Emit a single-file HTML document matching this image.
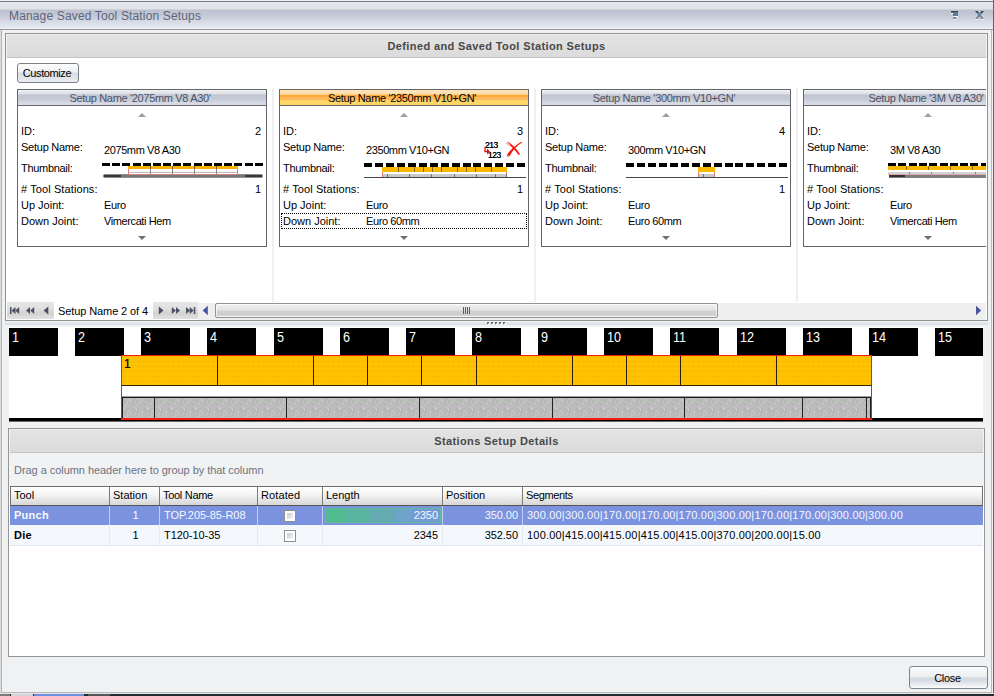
<!DOCTYPE html>
<html><head><meta charset="utf-8"><title>Manage Saved Tool Station Setups</title>
<style>
*{margin:0;padding:0;box-sizing:border-box}
html,body{width:994px;height:696px;overflow:hidden;background:#f0f1f2;font-family:"Liberation Sans",sans-serif;font-size:11px;color:#000}
#w{position:absolute;left:0;top:0;width:994px;height:696px;overflow:hidden;background:#f0f1f2}
#w div,#w i,#w span{position:absolute;display:block}
i{font-style:normal}
#tb{left:0;top:0;width:994px;height:30px;background:linear-gradient(#f4f4f6 0,#e6e7ea 2px,#e1e2e6 9px,#bcc2cf 10px,#c3c8d5 15px,#d6dbe6 22px,#e6eaf2 28px,#f4f4f6 29px)}
#tb .ttl{left:9px;top:9px;font-size:12px;color:#5e657a;letter-spacing:0.15px;white-space:nowrap}
.card{top:89px;width:250px;height:158px;border:1px solid #63666b;background:#fff;overflow:hidden}
.chd{left:0;top:0;width:248px;height:16px;border-bottom:1px solid #63666b;background:linear-gradient(#f0f1f4 0,#dcdee4 4px,#c0c5d1 5px,#c6cad6 9px,#dcdfe8 15px);text-align:center;color:#4a5268}
.chd span{position:static!important;display:inline!important;line-height:17px;letter-spacing:-0.33px;padding-right:4px}
.sel .chd{background:linear-gradient(#ffe2bc 0,#ffe0b4 3px,#f8d898 4px,#f6d08a 5px,#ffa832 5px,#ffaa38 7px,#ffb95c 7px,#ffb95c 10px,#ffd566 10px,#ffd768 15px);color:#000}
.t{white-space:nowrap;line-height:13px}
.t.v{letter-spacing:-0.4px}
.t.l{left:3px}
.t.v{left:86px}
.t.r{right:5px}
.tri{left:120px;width:0;height:0;border-left:4px solid transparent;border-right:4px solid transparent}
.tri.up{top:23px;border-bottom:4px solid #a0a0a0}
.tri.dn{top:146px;border-top:4px solid #707070}
.thumb{left:84px;top:73px;width:164px;height:16px;overflow:hidden}
.focus{left:1px;top:123px;width:246px;height:16px;border:1px dotted #000}
.ic1{left:205px;top:51px;width:20px;height:18px;font-size:8.5px;font-weight:normal;line-height:8px;letter-spacing:-0.5px;color:#000;text-shadow:0 0 0.4px #000}
.ic2{position:absolute;left:225px;top:51px}
.rb{top:328px;width:49px;height:28px;background:#000;color:#fff;font-size:14px}
.th{top:489px;line-height:13px;white-space:nowrap}
.td{line-height:13px;white-space:nowrap;letter-spacing:-0.05px}
.cb{width:12px;height:12px;border:1px solid #8e8f8f;background:linear-gradient(135deg,#c8ccd4 25%,#f4f6f8 75%);box-shadow:inset 0 0 0 2px #fff}
.rb span{left:3px;top:2px;line-height:14px;transform:scaleX(.9);transform-origin:0 0}
</style></head><body><div id="w">
<div id="tb"><div class="ttl">Manage Saved Tool Station Setups</div></div>
<svg style="position:absolute;left:945px;top:8px" width="45" height="14" viewBox="945 8 45 14" shape-rendering="crispEdges">
<rect x="951" y="11" width="7" height="1" fill="#3e3e46"/><rect x="951" y="12" width="7" height="1" fill="#6e747e"/>
<rect x="951" y="13" width="2" height="1" fill="#f4f6f8"/><rect x="953" y="13" width="5" height="3" fill="#5c7c9c"/>
<rect x="953" y="16" width="5" height="1" fill="#f4f6f8"/><rect x="953" y="17" width="3" height="2" fill="#7e848e"/><rect x="953" y="19" width="3" height="1" fill="#f4f6f8"/>
<g shape-rendering="auto"><path d="M975 11 L977.6 11 L984 19 L981.4 19 Z" fill="url(#xg)"/><path d="M984 11 L981.4 11 L975 19 L977.6 19 Z" fill="url(#xg)"/></g>
<rect x="975" y="19" width="3" height="1" fill="#f4f6f8"/><rect x="981" y="19" width="3" height="1" fill="#f4f6f8"/>
<defs><linearGradient id="xg" x1="0" y1="11" x2="0" y2="19" gradientUnits="userSpaceOnUse"><stop offset="0" stop-color="#38383e"/><stop offset=".25" stop-color="#4a4e58"/><stop offset=".3" stop-color="#6282a2"/><stop offset=".6" stop-color="#6282a2"/><stop offset=".65" stop-color="#7e858f"/><stop offset="1" stop-color="#868c96"/></linearGradient></defs>
</svg>
<i style="left:0;top:1px;width:994px;height:1px;background:#737a8a"></i>
<i style="left:0;top:29px;width:994px;height:1px;background:#9a9a9a"></i>
<i style="left:0px;top:30px;width:1px;height:664px;background:#dcdcdc"></i><i style="left:1px;top:30px;width:1px;height:663px;background:#b4b4b4"></i>
<i style="left:993px;top:0px;width:1px;height:694px;background:#5e6472"></i>
<i style="left:991px;top:30px;width:1px;height:663px;background:#b8b8b8"></i>
<!-- top panel -->
<div style="left:5px;top:33px;width:983px;height:288px;border:1px solid #919191;background:#fff"></div>
<div style="left:6px;top:34px;width:981px;height:24px;background:#f2f2f2"></div><div style="left:7px;top:35px;width:979px;height:23px;background:linear-gradient(#e3e3e3,#dbdbdb);border-bottom:1px solid #c4c4c4"></div>
<div style="left:6px;top:39px;width:981px;text-align:center;font-weight:bold;color:#484848;font-size:11px;line-height:14px;letter-spacing:0.38px">Defined and Saved Tool Station Setups</div>
<div style="left:17px;top:63px;width:62px;height:20px;border:1px solid #7b8087;border-radius:3px;background:linear-gradient(#fdfdfe 0,#eef0f3 8px,#d9dde3 9px,#e9ecf0 18px);text-align:center;line-height:18px;letter-spacing:-0.4px;padding-right:2px">Customize</div>
<i style="left:272px;top:88px;width:2px;height:214px;background:#f0f0f3"></i>
<i style="left:534px;top:88px;width:2px;height:214px;background:#f0f0f3"></i>
<i style="left:796px;top:88px;width:2px;height:214px;background:#f0f0f3"></i>
<div style="left:6px;top:84px;width:980px;height:218px;overflow:hidden">
<div style="left:-6px;top:-84px;width:994px;height:400px"><div class="card" style="left:17px;"><div class="chd"><span>Setup Name '2075mm V8 A30'</span></div><div class="tri up"></div><div class="tri dn"></div><div class="t l" style="top:35px">ID:</div><div class="t r" style="top:35px">2</div><div class="t l" style="top:51px;letter-spacing:-0.25px">Setup Name:</div><div class="t v" style="top:54px">2075mm V8 A30</div><div class="t l" style="top:72px;letter-spacing:-0.3px">Thumbnail:</div><div class="thumb"><i style="left:0.0px;top:0px;width:8px;height:3px;background:#000"></i><i style="left:10.2px;top:0px;width:8px;height:3px;background:#000"></i><i style="left:20.4px;top:0px;width:8px;height:3px;background:#000"></i><i style="left:30.5px;top:0px;width:8px;height:3px;background:#000"></i><i style="left:40.7px;top:0px;width:8px;height:3px;background:#000"></i><i style="left:50.9px;top:0px;width:8px;height:3px;background:#000"></i><i style="left:61.1px;top:0px;width:8px;height:3px;background:#000"></i><i style="left:71.3px;top:0px;width:8px;height:3px;background:#000"></i><i style="left:81.4px;top:0px;width:8px;height:3px;background:#000"></i><i style="left:91.6px;top:0px;width:8px;height:3px;background:#000"></i><i style="left:101.8px;top:0px;width:8px;height:3px;background:#000"></i><i style="left:112.0px;top:0px;width:8px;height:3px;background:#000"></i><i style="left:122.2px;top:0px;width:8px;height:3px;background:#000"></i><i style="left:132.3px;top:0px;width:8px;height:3px;background:#000"></i><i style="left:142.5px;top:0px;width:8px;height:3px;background:#000"></i><i style="left:152.7px;top:0px;width:8px;height:3px;background:#000"></i><i style="left:26px;top:3px;width:110px;height:3px;background:#f9b400"></i><i style="left:48px;top:3px;width:1px;height:8px;background:#6a5a40"></i><i style="left:70px;top:3px;width:1px;height:8px;background:#6a5a40"></i><i style="left:92px;top:3px;width:1px;height:8px;background:#6a5a40"></i><i style="left:114px;top:3px;width:1px;height:8px;background:#6a5a40"></i><i style="left:1px;top:11px;width:160px;height:4px;background:linear-gradient(#a0a0a0,#787878 1px,#787878 3px,#a8a8a8);border-radius:2px"></i><i style="left:2px;top:12px;width:17px;height:2px;background:#383838"></i><i style="left:143px;top:12px;width:17px;height:2px;background:#383838"></i><i style="left:26px;top:6px;width:110px;height:6px;border:1px solid #d88080;border-top:0;background:linear-gradient(#fff 0,#fff 3px,#bbb 3px,#bbb 4px,#fff 4px)"></i><i style="left:48px;top:6px;width:1px;height:5px;background:#888"></i><i style="left:70px;top:6px;width:1px;height:5px;background:#888"></i><i style="left:92px;top:6px;width:1px;height:5px;background:#888"></i><i style="left:114px;top:6px;width:1px;height:5px;background:#888"></i></div><div class="t l" style="top:93px;letter-spacing:0.1px"># Tool Stations:</div><div class="t r" style="top:93px">1</div><div class="t l" style="top:109px">Up Joint:</div><div class="t v" style="top:109px">Euro</div><div class="t l" style="top:125px">Down Joint:</div><div class="t v" style="top:125px">Vimercati Hem</div></div><div class="card sel" style="left:279px;"><div class="chd"><span>Setup Name '2350mm V10+GN'</span></div><div class="tri up"></div><div class="tri dn"></div><div class="t l" style="top:35px">ID:</div><div class="t r" style="top:35px">3</div><div class="t l" style="top:51px;letter-spacing:-0.25px">Setup Name:</div><div class="t v" style="top:54px">2350mm V10+GN</div><div class="t l" style="top:72px;letter-spacing:-0.3px">Thumbnail:</div><div class="thumb"><i style="left:0.0px;top:0px;width:8px;height:4px;background:#000"></i><i style="left:10.9px;top:0px;width:8px;height:4px;background:#000"></i><i style="left:21.9px;top:0px;width:8px;height:4px;background:#000"></i><i style="left:32.8px;top:0px;width:8px;height:4px;background:#000"></i><i style="left:43.8px;top:0px;width:8px;height:4px;background:#000"></i><i style="left:54.7px;top:0px;width:8px;height:4px;background:#000"></i><i style="left:65.6px;top:0px;width:8px;height:4px;background:#000"></i><i style="left:76.6px;top:0px;width:8px;height:4px;background:#000"></i><i style="left:87.5px;top:0px;width:8px;height:4px;background:#000"></i><i style="left:98.5px;top:0px;width:8px;height:4px;background:#000"></i><i style="left:109.4px;top:0px;width:8px;height:4px;background:#000"></i><i style="left:120.3px;top:0px;width:8px;height:4px;background:#000"></i><i style="left:131.3px;top:0px;width:8px;height:4px;background:#000"></i><i style="left:142.2px;top:0px;width:8px;height:4px;background:#000"></i><i style="left:153.2px;top:0px;width:8px;height:4px;background:#000"></i><i style="left:18px;top:4px;width:125px;height:5px;background:#fbb800"></i><i style="left:34px;top:4px;width:1px;height:5px;background:#8a6a10"></i><i style="left:50px;top:4px;width:1px;height:5px;background:#8a6a10"></i><i style="left:59px;top:4px;width:1px;height:5px;background:#8a6a10"></i><i style="left:68px;top:4px;width:1px;height:5px;background:#8a6a10"></i><i style="left:77px;top:4px;width:1px;height:5px;background:#8a6a10"></i><i style="left:93px;top:4px;width:1px;height:5px;background:#8a6a10"></i><i style="left:102px;top:4px;width:1px;height:5px;background:#8a6a10"></i><i style="left:111px;top:4px;width:1px;height:5px;background:#8a6a10"></i><i style="left:127px;top:4px;width:1px;height:5px;background:#8a6a10"></i><i style="left:18px;top:9px;width:125px;height:6px;border:1px solid #d88080;border-top:0;background:linear-gradient(#fff 0,#fff 2px,#c8c8c8 2px)"></i><i style="left:23px;top:11px;width:1px;height:3px;background:#777"></i><i style="left:45px;top:11px;width:1px;height:3px;background:#777"></i><i style="left:67px;top:11px;width:1px;height:3px;background:#777"></i><i style="left:90px;top:11px;width:1px;height:3px;background:#777"></i><i style="left:112px;top:11px;width:1px;height:3px;background:#777"></i><i style="left:131px;top:11px;width:1px;height:3px;background:#777"></i><i style="left:142px;top:11px;width:1px;height:3px;background:#777"></i><i style="left:0px;top:14px;width:162px;height:1px;background:#444"></i></div><div class="t l" style="top:93px;letter-spacing:0.1px"># Tool Stations:</div><div class="t r" style="top:93px">1</div><div class="t l" style="top:109px">Up Joint:</div><div class="t v" style="top:109px">Euro</div><div class="t l" style="top:125px">Down Joint:</div><div class="t v" style="top:125px">Euro 60mm</div><div class="focus"></div><div class="ic1"><span style="left:0px;top:0">213</span><span style="left:3px;top:10px">123</span><svg width="8" height="10" style="position:absolute;left:-1px;top:6px" viewBox="0 0 8 10"><path d="M1 0 V4.5 H4" stroke="#e01010" stroke-width="1.3" fill="none"/><path d="M3 1.5 L6 4.5 L3 7.5 Z" fill="#e01010"/></svg></div><svg class="ic2" width="18" height="17" viewBox="0 0 18 17"><path d="M16.8 0.8 C12 3 5.5 8.5 1.8 14.2 C1.6 15.6 3.4 16 4.6 15 C7.5 9.5 12 4.6 17.2 1.6 Z" fill="#f41408"/><path d="M1.6 2.2 C6 4.5 10.5 9.5 13.6 14 L15 13.2 C12 8 7.5 3.4 3.4 0.9 Z" fill="#f41408"/><path d="M1.6 1.4 L4.6 4.2" stroke="#efb0b0" stroke-width="2.2"/><path d="M2.4 14.6 L3.6 15" stroke="#f0a0a0" stroke-width="1.6"/></svg></div><div class="card" style="left:541px;"><div class="chd"><span>Setup Name '300mm V10+GN'</span></div><div class="tri up"></div><div class="tri dn"></div><div class="t l" style="top:35px">ID:</div><div class="t r" style="top:35px">4</div><div class="t l" style="top:51px;letter-spacing:-0.25px">Setup Name:</div><div class="t v" style="top:54px">300mm V10+GN</div><div class="t l" style="top:72px;letter-spacing:-0.3px">Thumbnail:</div><div class="thumb"><i style="left:0.0px;top:0px;width:8px;height:4px;background:#000"></i><i style="left:10.9px;top:0px;width:8px;height:4px;background:#000"></i><i style="left:21.9px;top:0px;width:8px;height:4px;background:#000"></i><i style="left:32.8px;top:0px;width:8px;height:4px;background:#000"></i><i style="left:43.8px;top:0px;width:8px;height:4px;background:#000"></i><i style="left:54.7px;top:0px;width:8px;height:4px;background:#000"></i><i style="left:65.6px;top:0px;width:8px;height:4px;background:#000"></i><i style="left:76.6px;top:0px;width:8px;height:4px;background:#000"></i><i style="left:87.5px;top:0px;width:8px;height:4px;background:#000"></i><i style="left:98.5px;top:0px;width:8px;height:4px;background:#000"></i><i style="left:109.4px;top:0px;width:8px;height:4px;background:#000"></i><i style="left:120.3px;top:0px;width:8px;height:4px;background:#000"></i><i style="left:131.3px;top:0px;width:8px;height:4px;background:#000"></i><i style="left:142.2px;top:0px;width:8px;height:4px;background:#000"></i><i style="left:153.2px;top:0px;width:8px;height:4px;background:#000"></i><i style="left:72px;top:4px;width:17px;height:5px;background:#fbb800"></i><i style="left:72px;top:9px;width:17px;height:6px;border:1px solid #d88080;border-top:0;background:linear-gradient(#fff 0,#fff 2px,#c8c8c8 2px)"></i><i style="left:77px;top:11px;width:1px;height:3px;background:#777"></i><i style="left:0px;top:14px;width:162px;height:1px;background:#444"></i></div><div class="t l" style="top:93px;letter-spacing:0.1px"># Tool Stations:</div><div class="t r" style="top:93px">1</div><div class="t l" style="top:109px">Up Joint:</div><div class="t v" style="top:109px">Euro</div><div class="t l" style="top:125px">Down Joint:</div><div class="t v" style="top:125px">Euro 60mm</div></div><div class="card" style="left:803px;"><div class="chd"><span>Setup Name '3M V8 A30'</span></div><div class="tri up"></div><div class="tri dn"></div><div class="t l" style="top:35px">ID:</div><div class="t r" style="top:35px"></div><div class="t l" style="top:51px;letter-spacing:-0.25px">Setup Name:</div><div class="t v" style="top:54px">3M V8 A30</div><div class="t l" style="top:72px;letter-spacing:-0.3px">Thumbnail:</div><div class="thumb"><i style="left:0.0px;top:0px;width:8px;height:3px;background:#000"></i><i style="left:10.3px;top:0px;width:8px;height:3px;background:#000"></i><i style="left:20.6px;top:0px;width:8px;height:3px;background:#000"></i><i style="left:30.9px;top:0px;width:8px;height:3px;background:#000"></i><i style="left:41.2px;top:0px;width:8px;height:3px;background:#000"></i><i style="left:51.5px;top:0px;width:8px;height:3px;background:#000"></i><i style="left:61.8px;top:0px;width:8px;height:3px;background:#000"></i><i style="left:72.1px;top:0px;width:8px;height:3px;background:#000"></i><i style="left:82.4px;top:0px;width:8px;height:3px;background:#000"></i><i style="left:92.7px;top:0px;width:8px;height:3px;background:#000"></i><i style="left:0px;top:3px;width:110px;height:4px;background:#fbb800"></i><i style="left:18px;top:3px;width:1px;height:4px;background:#8a6a10"></i><i style="left:40px;top:3px;width:1px;height:4px;background:#8a6a10"></i><i style="left:62px;top:3px;width:1px;height:4px;background:#8a6a10"></i><i style="left:84px;top:3px;width:1px;height:4px;background:#8a6a10"></i><i style="left:106px;top:3px;width:1px;height:4px;background:#8a6a10"></i><i style="left:0px;top:9px;width:110px;height:2px;background:#d4d4d4"></i><i style="left:0px;top:11px;width:110px;height:1px;background:#e0a8a8"></i><i style="left:21px;top:9px;width:1px;height:2px;background:#888"></i><i style="left:43px;top:9px;width:1px;height:2px;background:#888"></i><i style="left:65px;top:9px;width:1px;height:2px;background:#888"></i><i style="left:87px;top:9px;width:1px;height:2px;background:#888"></i><i style="left:109px;top:9px;width:1px;height:2px;background:#888"></i><i style="left:1px;top:12px;width:110px;height:3px;background:#7e7e7e"></i><i style="left:1px;top:12px;width:16px;height:2px;background:#333"></i></div><div class="t l" style="top:93px;letter-spacing:0.1px"># Tool Stations:</div><div class="t r" style="top:93px">1</div><div class="t l" style="top:109px">Up Joint:</div><div class="t v" style="top:109px">Euro</div><div class="t l" style="top:125px">Down Joint:</div><div class="t v" style="top:125px">Vimercati Hem</div></div></div></div>
<!-- nav -->
<div style="left:7px;top:302px;width:47px;height:17px;background:linear-gradient(#e6e6e6 0,#e0e0e0 7px,#d2d2d2 11px,#d6d6d6 13px,#e2e2e2 17px)"></div>
<div style="left:153px;top:302px;width:45px;height:17px;background:linear-gradient(#e6e6e6 0,#e0e0e0 7px,#d2d2d2 11px,#d6d6d6 13px,#e2e2e2 17px)"></div>
<div style="left:198px;top:303px;width:788px;height:17px;background:#efefef"></div>
<div style="left:58px;top:305px;line-height:13px;white-space:nowrap;letter-spacing:-0.1px">Setup Name 2 of 4</div>
<div style="left:215px;top:303px;width:503px;height:15px;border:1px solid #929292;border-radius:2px;background:linear-gradient(#f0f0f0 0,#e4e4e4 6px,#d2d2d2 7px,#cecece 11px,#e0e0e0 13px);box-shadow:inset 0 0 0 1px rgba(255,255,255,.75)"></div>
<div style="left:5px;top:321px;width:983px;height:6px;background:linear-gradient(#f3f4f5 0,#f0f1f3 1px,#e6e8ec 1px,#dde0e7 3px,#d8dce3 4px,#f0f1f3 4px,#f0f1f3 6px)"></div>
<svg style="position:absolute;left:0;top:0" width="994" height="330" viewBox="0 0 994 330"><rect x="10" y="307" width="1.5" height="7" fill="#4b5162"/><path d="M11.5 310.5 L15.5 307 V314 Z" fill="#4b5162"/><path d="M15.2 310.5 L19.2 307 V314 Z" fill="#4b5162"/><path d="M26 310.5 L30 307 V314 Z" fill="#4b5162"/><path d="M30.2 310.5 L34.2 307 V314 Z" fill="#4b5162"/><path d="M43.5 310.5 L48.3 306.5 V314.5 Z" fill="#4b5162"/><path d="M163.5 310.5 L158.8 306.5 V314.5 Z" fill="#4b5162"/><path d="M175.8 310.5 L171.8 307 V314 Z" fill="#4b5162"/><path d="M180 310.5 L176 307 V314 Z" fill="#4b5162"/><path d="M190 310.5 L186 307 V314 Z" fill="#4b5162"/><path d="M193.7 310.5 L189.7 307 V314 Z" fill="#4b5162"/><rect x="193.8" y="307" width="1.5" height="7" fill="#4b5162"/><path d="M202.6 310.5 L207.8 305.8 V315.2 Z" fill="#4a55a0"/><path d="M981.2 310.5 L976 305.8 V315.2 Z" fill="#4a55a0"/><rect x="463" y="307" width="1" height="7" fill="#5e5e5e"/><rect x="465" y="307" width="1" height="7" fill="#5e5e5e"/><rect x="467" y="307" width="1" height="7" fill="#5e5e5e"/><rect x="469" y="307" width="1" height="7" fill="#5e5e5e"/><rect x="487" y="322" width="2" height="2" fill="#6a6a6a"/><rect x="488" y="323" width="2" height="2" fill="#fff" opacity=".9"/><rect x="487" y="322" width="2" height="1.5" fill="#6a6a6a"/><rect x="491" y="322" width="2" height="2" fill="#6a6a6a"/><rect x="492" y="323" width="2" height="2" fill="#fff" opacity=".9"/><rect x="491" y="322" width="2" height="1.5" fill="#6a6a6a"/><rect x="495" y="322" width="2" height="2" fill="#6a6a6a"/><rect x="496" y="323" width="2" height="2" fill="#fff" opacity=".9"/><rect x="495" y="322" width="2" height="1.5" fill="#6a6a6a"/><rect x="499" y="322" width="2" height="2" fill="#6a6a6a"/><rect x="500" y="323" width="2" height="2" fill="#fff" opacity=".9"/><rect x="499" y="322" width="2" height="1.5" fill="#6a6a6a"/><rect x="503" y="322" width="2" height="2" fill="#6a6a6a"/><rect x="504" y="323" width="2" height="2" fill="#fff" opacity=".9"/><rect x="503" y="322" width="2" height="1.5" fill="#6a6a6a"/></svg>
<!-- ruler -->
<div style="left:9px;top:327px;width:974px;height:95px;background:#fff"></div>
<div class="rb" style="left:9px;width:49px"><span>1</span></div><div class="rb" style="left:75px;width:49px"><span>2</span></div><div class="rb" style="left:141px;width:49px"><span>3</span></div><div class="rb" style="left:207px;width:49px"><span>4</span></div><div class="rb" style="left:274px;width:49px"><span>5</span></div><div class="rb" style="left:340px;width:49px"><span>6</span></div><div class="rb" style="left:406px;width:49px"><span>7</span></div><div class="rb" style="left:472px;width:49px"><span>8</span></div><div class="rb" style="left:538px;width:49px"><span>9</span></div><div class="rb" style="left:604px;width:49px"><span>10</span></div><div class="rb" style="left:670px;width:49px"><span>11</span></div><div class="rb" style="left:737px;width:49px"><span>12</span></div><div class="rb" style="left:803px;width:49px"><span>13</span></div><div class="rb" style="left:869px;width:49px"><span>14</span></div><div class="rb" style="left:935px;width:48px"><span>15</span></div>
<div style="left:121px;top:355px;width:751px;height:31px;background:#ffc000;border:1px solid #f41c10;border-bottom:1px solid #30250a"></div>
<svg style="position:absolute;left:122px;top:356px" width="749" height="29"><defs><pattern id="po" width="5" height="5" patternUnits="userSpaceOnUse"><rect width="5" height="5" fill="#ffc000"/><rect x="1" y="1" width="1" height="1" fill="#ffae00"/><rect x="2" y="2" width="1" height="1" fill="#ffd010"/><rect x="0" y="2" width="1" height="1" fill="#ffd010"/><rect x="2" y="0" width="1" height="1" fill="#ffb400"/><rect x="0" y="0" width="1" height="1" fill="#ffb400"/></pattern><pattern id="pg" width="12" height="12" patternUnits="userSpaceOnUse"><rect width="12" height="12" fill="#bebebe"/><rect x="0" y="0" width="1" height="1" fill="#b4b4b4"/><rect x="1" y="0" width="1" height="1" fill="#ccb2cc"/><rect x="3" y="0" width="1" height="1" fill="#aab8aa"/><rect x="5" y="0" width="1" height="1" fill="#d0d0d0"/><rect x="6" y="0" width="1" height="1" fill="#aab8aa"/><rect x="8" y="0" width="1" height="1" fill="#aab8aa"/><rect x="10" y="0" width="1" height="1" fill="#aab8aa"/><rect x="11" y="0" width="1" height="1" fill="#aab8aa"/><rect x="2" y="1" width="1" height="1" fill="#aab8aa"/><rect x="3" y="1" width="1" height="1" fill="#ccb2cc"/><rect x="7" y="1" width="1" height="1" fill="#d0d0d0"/><rect x="9" y="1" width="1" height="1" fill="#aab8aa"/><rect x="11" y="1" width="1" height="1" fill="#b4b4b4"/><rect x="0" y="2" width="1" height="1" fill="#ccb2cc"/><rect x="1" y="2" width="1" height="1" fill="#aab8aa"/><rect x="2" y="2" width="1" height="1" fill="#b4b4b4"/><rect x="4" y="2" width="1" height="1" fill="#ccb2cc"/><rect x="7" y="2" width="1" height="1" fill="#d0d0d0"/><rect x="9" y="2" width="1" height="1" fill="#aab8aa"/><rect x="10" y="2" width="1" height="1" fill="#aab8aa"/><rect x="11" y="2" width="1" height="1" fill="#ccb2cc"/><rect x="2" y="3" width="1" height="1" fill="#b4b4b4"/><rect x="5" y="3" width="1" height="1" fill="#b4b4b4"/><rect x="8" y="3" width="1" height="1" fill="#ccb2cc"/><rect x="1" y="4" width="1" height="1" fill="#b4b4b4"/><rect x="3" y="4" width="1" height="1" fill="#aab8aa"/><rect x="4" y="4" width="1" height="1" fill="#d0d0d0"/><rect x="6" y="4" width="1" height="1" fill="#ccb2cc"/><rect x="8" y="4" width="1" height="1" fill="#aab8aa"/><rect x="1" y="5" width="1" height="1" fill="#b4b4b4"/><rect x="10" y="5" width="1" height="1" fill="#aab8aa"/><rect x="3" y="6" width="1" height="1" fill="#b4b4b4"/><rect x="4" y="6" width="1" height="1" fill="#d0d0d0"/><rect x="6" y="6" width="1" height="1" fill="#aab8aa"/><rect x="8" y="6" width="1" height="1" fill="#ccb2cc"/><rect x="9" y="6" width="1" height="1" fill="#aab8aa"/><rect x="10" y="6" width="1" height="1" fill="#aab8aa"/><rect x="0" y="7" width="1" height="1" fill="#aab8aa"/><rect x="1" y="7" width="1" height="1" fill="#ccb2cc"/><rect x="2" y="7" width="1" height="1" fill="#d0d0d0"/><rect x="4" y="7" width="1" height="1" fill="#aab8aa"/><rect x="10" y="7" width="1" height="1" fill="#ccb2cc"/><rect x="11" y="7" width="1" height="1" fill="#d0d0d0"/><rect x="0" y="8" width="1" height="1" fill="#b4b4b4"/><rect x="3" y="8" width="1" height="1" fill="#ccb2cc"/><rect x="4" y="8" width="1" height="1" fill="#ccb2cc"/><rect x="5" y="8" width="1" height="1" fill="#ccb2cc"/><rect x="6" y="8" width="1" height="1" fill="#ccb2cc"/><rect x="9" y="8" width="1" height="1" fill="#ccb2cc"/><rect x="10" y="8" width="1" height="1" fill="#aab8aa"/><rect x="11" y="8" width="1" height="1" fill="#d0d0d0"/><rect x="0" y="9" width="1" height="1" fill="#d0d0d0"/><rect x="7" y="9" width="1" height="1" fill="#aab8aa"/><rect x="0" y="10" width="1" height="1" fill="#d0d0d0"/><rect x="1" y="10" width="1" height="1" fill="#d0d0d0"/><rect x="2" y="10" width="1" height="1" fill="#aab8aa"/><rect x="4" y="10" width="1" height="1" fill="#aab8aa"/><rect x="5" y="10" width="1" height="1" fill="#aab8aa"/><rect x="6" y="10" width="1" height="1" fill="#ccb2cc"/><rect x="7" y="10" width="1" height="1" fill="#ccb2cc"/><rect x="8" y="10" width="1" height="1" fill="#b4b4b4"/><rect x="9" y="10" width="1" height="1" fill="#aab8aa"/><rect x="10" y="10" width="1" height="1" fill="#aab8aa"/><rect x="11" y="10" width="1" height="1" fill="#ccb2cc"/><rect x="0" y="11" width="1" height="1" fill="#aab8aa"/><rect x="1" y="11" width="1" height="1" fill="#d0d0d0"/><rect x="2" y="11" width="1" height="1" fill="#aab8aa"/><rect x="5" y="11" width="1" height="1" fill="#ccb2cc"/><rect x="6" y="11" width="1" height="1" fill="#ccb2cc"/><rect x="7" y="11" width="1" height="1" fill="#b4b4b4"/><rect x="8" y="11" width="1" height="1" fill="#d0d0d0"/><rect x="9" y="11" width="1" height="1" fill="#aab8aa"/></pattern></defs><rect width="749" height="29" fill="url(#po)"/></svg>
<div style="left:124px;top:358px;font-size:12px;line-height:13px;color:#281000;text-shadow:0 0 0.3px #281000">1</div>
<i style="left:217px;top:356px;width:1px;height:29px;background:#2a1a00"></i><i style="left:313px;top:356px;width:1px;height:29px;background:#2a1a00"></i><i style="left:367px;top:356px;width:1px;height:29px;background:#2a1a00"></i><i style="left:421px;top:356px;width:1px;height:29px;background:#2a1a00"></i><i style="left:476px;top:356px;width:1px;height:29px;background:#2a1a00"></i><i style="left:572px;top:356px;width:1px;height:29px;background:#2a1a00"></i><i style="left:626px;top:356px;width:1px;height:29px;background:#2a1a00"></i><i style="left:680px;top:356px;width:1px;height:29px;background:#2a1a00"></i><i style="left:776px;top:356px;width:1px;height:29px;background:#2a1a00"></i>
<div style="left:121px;top:386px;width:751px;height:34px;border:1px solid #f41c10;border-top:0;border-bottom-width:2px"></div>
<div style="left:122px;top:397px;width:749px;height:21px;background:#bebfbe;border:1px solid #1c1c1c;border-bottom:0"></div>
<i style="left:122px;top:396px;width:749px;height:1px;background:#a0a0a0"></i>
<svg style="position:absolute;left:123px;top:398px" width="747" height="20"><rect width="747" height="20" fill="url(#pg)"/></svg>
<i style="left:154px;top:398px;width:1px;height:20px;background:#222"></i><i style="left:286px;top:398px;width:1px;height:20px;background:#222"></i><i style="left:419px;top:398px;width:1px;height:20px;background:#222"></i><i style="left:552px;top:398px;width:1px;height:20px;background:#222"></i><i style="left:684px;top:398px;width:1px;height:20px;background:#222"></i><i style="left:802px;top:398px;width:1px;height:20px;background:#222"></i><i style="left:866px;top:398px;width:1px;height:20px;background:#222"></i>
<i style="left:9px;top:418px;width:112px;height:3px;background:#000"></i><i style="left:9px;top:421px;width:974px;height:1px;background:#6a6a6a"></i>
<i style="left:872px;top:418px;width:111px;height:3px;background:#000"></i>
<i style="left:121px;top:420px;width:751px;height:1px;background:#000"></i>
<!-- bottom panel -->
<div style="left:8px;top:428px;width:977px;height:229px;border:1px solid #959595;background:#fff"></div>
<div style="left:9px;top:429px;width:975px;height:24px;background:#f2f2f2"></div><div style="left:10px;top:430px;width:973px;height:23px;background:linear-gradient(#e3e3e3,#dbdbdb);border-bottom:1px solid #c4c4c4"></div>
<div style="left:9px;top:434px;width:975px;text-align:center;font-weight:bold;color:#484848;line-height:14px;letter-spacing:0.38px">Stations Setup Details</div>
<div style="left:9px;top:453px;width:975px;height:34px;background:#f1f2f4"></div>
<div style="left:14px;top:464px;color:#6c7280;line-height:13px;white-space:nowrap;letter-spacing:-0.05px">Drag a column header here to group by that column</div>

<!-- table -->
<div style="left:10px;top:486px;width:973px;height:20px;border:1px solid #6e6e6e;border-bottom-color:#555;background:linear-gradient(#ffffff 0,#f6f6f6 40%,#e6e6e6 70%,#d6d6d6 100%)"></div>
<div style="left:10px;top:506px;width:973px;height:19px;background:#7b93df"></div>
<div style="left:10px;top:525px;width:973px;height:21px;background:#f4f8fd;border-bottom:1px solid #dfe6f2"></div>
<div class="th" style="left:14px;letter-spacing:0px">Tool</div><div class="th" style="left:113px;letter-spacing:0px">Station</div><div class="th" style="left:163px;letter-spacing:-0.3px">Tool Name</div><div class="th" style="left:261px;letter-spacing:0.1px">Rotated</div><div class="th" style="left:326px;letter-spacing:0px">Length</div><div class="th" style="left:446px;letter-spacing:0px">Position</div><div class="th" style="left:526px;letter-spacing:-0.35px">Segments</div><i style="left:109px;top:487px;width:1px;height:18px;background:#7a7a7a"></i><i style="left:109px;top:506px;width:1px;height:19px;background:#c4cef4"></i><i style="left:109px;top:525px;width:1px;height:20px;background:#e4e8f0"></i><i style="left:159px;top:487px;width:1px;height:18px;background:#7a7a7a"></i><i style="left:159px;top:506px;width:1px;height:19px;background:#c4cef4"></i><i style="left:159px;top:525px;width:1px;height:20px;background:#e4e8f0"></i><i style="left:257px;top:487px;width:1px;height:18px;background:#7a7a7a"></i><i style="left:257px;top:506px;width:1px;height:19px;background:#c4cef4"></i><i style="left:257px;top:525px;width:1px;height:20px;background:#e4e8f0"></i><i style="left:322px;top:487px;width:1px;height:18px;background:#7a7a7a"></i><i style="left:322px;top:506px;width:1px;height:19px;background:#c4cef4"></i><i style="left:322px;top:525px;width:1px;height:20px;background:#e4e8f0"></i><i style="left:442px;top:487px;width:1px;height:18px;background:#7a7a7a"></i><i style="left:442px;top:506px;width:1px;height:19px;background:#c4cef4"></i><i style="left:442px;top:525px;width:1px;height:20px;background:#e4e8f0"></i><i style="left:522px;top:487px;width:1px;height:18px;background:#7a7a7a"></i><i style="left:522px;top:506px;width:1px;height:19px;background:#c4cef4"></i><i style="left:522px;top:525px;width:1px;height:20px;background:#e4e8f0"></i><div style="left:325px;top:508px;width:116px;height:15px;background:linear-gradient(90deg,#52bc90 0,#52bc90 19px,#5ab4a0 19px,#5ab4a0 43px,#64aab0 43px,#64aab0 68px,#6ea4c8 68px,#6ea4c8 84px,#729cd2 84px,#7699d8 116px);border:1px solid #5ebe98"></div><div class="td" style="left:14px;top:509px;color:#f6f8ff;font-weight:bold;letter-spacing:0.25px">Punch</div><div class="td" style="left:110px;width:51px;text-align:center;top:509px;color:#f6f8ff">1</div><div class="td" style="left:164px;top:509px;color:#f6f8ff">TOP.205-85-R08</div><div class="td" style="left:322px;width:116px;text-align:right;top:509px;color:#f6f8ff">2350</div><div class="td" style="left:442px;width:76px;text-align:right;top:509px;color:#f6f8ff">350.00</div><div class="td" style="left:527px;top:509px;color:#f6f8ff;letter-spacing:0.2px">300.00|300.00|170.00|170.00|170.00|300.00|170.00|170.00|300.00|300.00</div><div class="cb" style="left:284px;top:510px"></div><div class="td" style="left:14px;top:529px;color:#000;font-weight:bold;letter-spacing:0.25px">Die</div><div class="td" style="left:110px;width:51px;text-align:center;top:529px;color:#000">1</div><div class="td" style="left:164px;top:529px;color:#000">T120-10-35</div><div class="td" style="left:322px;width:116px;text-align:right;top:529px;color:#000">2345</div><div class="td" style="left:442px;width:76px;text-align:right;top:529px;color:#000">352.50</div><div class="td" style="left:527px;top:529px;color:#000;letter-spacing:0.2px">100.00|415.00|415.00|415.00|415.00|370.00|200.00|15.00</div><div class="cb" style="left:284px;top:530px"></div>
<!-- close -->
<div style="left:909px;top:666px;width:79px;height:23px;border:1px solid #7d838c;border-radius:3px;background:linear-gradient(#fdfdfd 0,#f4f5f6 4px,#eceef1 10px,#d2d9df 11px,#d8dde4 14px,#eceef2 18px,#fcfcfd 21px);text-align:center;line-height:23px;letter-spacing:-0.3px;padding-right:2px">Close</div>
<i style="left:1px;top:692px;width:991px;height:1px;background:#b8b8b8"></i>
<i style="left:0;top:693px;width:994px;height:1px;background:#e4e4e4"></i>
<i style="left:0;top:694px;width:994px;height:2px;background:#222c32"></i>
<i style="left:0;top:694px;width:10px;height:2px;background:#7c7c7c"></i>
<i style="left:11px;top:694px;width:22px;height:2px;background:#d2d4da"></i>
<i style="left:34px;top:694px;width:50px;height:2px;background:#6e8ee2"></i>
<i style="left:88px;top:694px;width:22px;height:2px;background:#50565c"></i>
</div></body></html>
